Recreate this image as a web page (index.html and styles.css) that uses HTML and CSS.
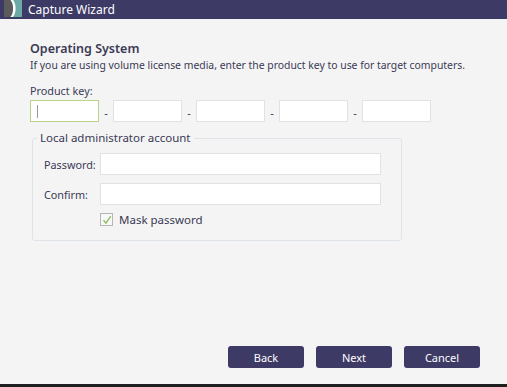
FILE: index.html
```html
<!DOCTYPE html>
<html>
<head>
<meta charset="utf-8">
<link rel="stylesheet" href="styles.css">
</head>
<body>
<div class="window">
  <div class="titlebar">
    <svg class="app-icon" width="18" height="17" viewBox="0 0 18 17">
      <rect x="0" y="0" width="9" height="17" fill="#5c5b5b"/>
      <rect x="9" y="0" width="9" height="17" fill="#6aa9a6"/>
      <path d="M6.5 0 C10 4 10 13 6.5 17 L9 17 C12.5 13 12.5 4 9 0 Z" fill="#ffffff"/>
    </svg>
    <span class="title">Capture Wizard</span>
  </div>
  <div class="content">
    <h1 class="heading">Operating System</h1>
    <p class="desc">If you are using volume license media, enter the product key to use for target computers.</p>
    <div class="label">Product key:</div>
    <div class="key-row">
      <div class="field key focused"><span class="caret"></span></div>
      <span class="dash">-</span>
      <div class="field key"></div>
      <span class="dash">-</span>
      <div class="field key"></div>
      <span class="dash">-</span>
      <div class="field key"></div>
      <span class="dash">-</span>
      <div class="field key"></div>
    </div>
    <fieldset class="group">
      <legend class="legend">Local administrator account</legend>
      <div class="form-row">
        <span class="row-label">Password:</span>
        <div class="field wide"></div>
      </div>
      <div class="form-row">
        <span class="row-label">Confirm:</span>
        <div class="field wide"></div>
      </div>
      <div class="check-row">
        <span class="checkbox">
          <svg width="10" height="10" viewBox="0 0 10 10"><path d="M1.5 5.2 L4 8.2 L8.8 1.2" fill="none" stroke="#8cc063" stroke-width="1.4"/></svg>
        </span>
        <span class="check-label">Mask password</span>
      </div>
    </fieldset>
  </div>
  <div class="buttons">
    <button class="btn">Back</button>
    <button class="btn">Next</button>
    <button class="btn">Cancel</button>
  </div>
  <div class="bottom-edge"></div>
</div>
</body>
</html>
```
FILE: styles.css
```css
html, body {
  margin: 0;
  padding: 0;
}
body {
  width: 507px;
  height: 387px;
  overflow: hidden;
  background: #f4f4f4;
  font-family: "Noto Sans", "Open Sans", sans-serif;
  color: #3a3a55;
}
.window {
  display: flex;
  flex-direction: column;
  height: 387px;
}
.titlebar {
  height: 19px;
  background: #3d3a66;
  display: flex;
  align-items: center;
  flex-shrink: 0;
}
.app-icon {
  margin-left: 4px;
  align-self: flex-start;
}
.title {
  color: #ffffff;
  font-size: 12px;
  margin-left: 6px;
  line-height: 19px;
}
.content {
  padding: 21px 0 0 30px;
  flex: 1;
}
.heading {
  margin: 0;
  font-size: 12.5px;
  font-weight: 600;
  line-height: 17px;
  color: #3b3a55;
}
.desc {
  margin: 0;
  font-size: 10.4px;
  line-height: 16px;
  color: #3a3a55;
}
.label {
  margin-top: 10px;
  font-size: 10.8px;
  line-height: 15px;
}
.key-row {
  display: flex;
  align-items: center;
  margin-top: 2px;
}
.field {
  background: #ffffff;
  border: 1px solid #e2e2e2;
  box-sizing: border-box;
}
.key {
  width: 69px;
  height: 22px;
}
.key.focused {
  border-color: #b7d38a;
  position: relative;
}
.caret {
  position: absolute;
  left: 6px;
  top: 4px;
  width: 1px;
  height: 13px;
  background: #9a9a9a;
}
.dash {
  width: 14px;
  text-align: center;
  font-size: 11px;
  line-height: 14px;
  padding-top: 3px;
  color: #3a3a55;
}
.group {
  margin: 9px 0 0 2px;
  width: 370px;
  box-sizing: border-box;
  border: 1px solid #dde3e8;
  border-radius: 3px;
  padding: 8px 20px 13px 11px;
  min-width: 0;
}
.legend {
  font-size: 11.5px;
  padding: 0 3px;
  margin-left: -7px;
  line-height: 14px;
  color: #3a3a55;
}
.form-row {
  display: flex;
  align-items: center;
  height: 22px;
  margin-bottom: 8px;
}
.row-label {
  width: 56px;
  font-size: 10.8px;
}
.wide {
  width: 281px;
  height: 22px;
}
.check-row {
  display: flex;
  align-items: center;
  margin-left: 56px;
  margin-top: -1px;
}
.checkbox {
  width: 13px;
  height: 13px;
  box-sizing: border-box;
  border: 1px solid #b6b6b6;
  background: #f8f8f8;
  display: flex;
  align-items: center;
  justify-content: center;
}
.check-label {
  margin-left: 6px;
  font-size: 11.5px;
}
.buttons {
  display: flex;
  justify-content: flex-end;
  gap: 12px;
  padding: 0 27px 16px 0;
}
.btn {
  width: 76px;
  height: 22px;
  border: none;
  border-radius: 3px;
  background: #3d3a66;
  color: #ffffff;
  font-family: "Noto Sans", "Open Sans", sans-serif;
  font-size: 11px;
  padding: 0;
}
.bottom-edge {
  height: 3px;
  background: #1f1f1f;
  flex-shrink: 0;
}
```
